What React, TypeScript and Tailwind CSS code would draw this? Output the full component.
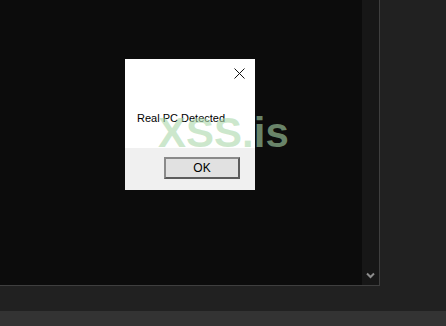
import React from 'react';

function ScrollChevron() {
  return (
    <svg width="9" height="7" viewBox="0 0 9 7" className="mb-[6px]">
      <path d="M1 1.5 L4.5 5 L8 1.5" stroke="#8c8c8c" strokeWidth="2" fill="none" />
    </svg>
  );
}

function CloseIcon() {
  return (
    <svg width="11" height="11" viewBox="0 0 11 11">
      <path d="M0.5 0.5 L10.5 10.5 M10.5 0.5 L0.5 10.5" stroke="#111" strokeWidth="1" fill="none" />
    </svg>
  );
}

function MessageBox() {
  return (
    <div className="absolute left-[125px] top-[59px] w-[130px] h-[131px] flex flex-col font-['Liberation_Sans',Arial,sans-serif]">
      <div className="h-[89px] bg-white flex flex-col">
        <div className="flex justify-end pt-[9px] pr-[10px]">
          <CloseIcon />
        </div>
        <div className="mt-[33px] pl-[12px] text-[11px] leading-[13px] text-black">Real PC Detected</div>
      </div>
      <div className="flex-1 bg-[#f0f0f0] flex items-start pt-[9px] pl-[39px]">
        <button className="w-[76px] h-[22px] bg-[#e1e1e1] border-2 border-t-[#8a8a8a] border-l-[#8a8a8a] border-b-[#5c5c5c] border-r-[#5c5c5c] text-[12px] leading-none text-black flex items-center justify-center">
          OK
        </button>
      </div>
    </div>
  );
}

export default function App() {
  return (
    <div className="relative w-[446px] h-[326px] bg-[#212121] flex flex-col overflow-hidden">
      <div className="h-[286px] flex">
        <div className="w-[380px] flex border-r border-b border-[#3f3f3f]">
          <div className="flex-1 bg-[#0c0c0c]" />
          <div className="w-[17px] bg-[#171717] flex flex-col justify-end items-center">
            <ScrollChevron />
          </div>
        </div>
      </div>
      <div className="flex-1" />
      <div className="h-[15px] bg-[#333333]" />

      <MessageBox />

      <div className="absolute left-[158px] top-[112px] text-[42px] leading-none font-bold font-['Liberation_Sans',Arial,sans-serif] text-[rgba(170,215,170,0.6)] pointer-events-none">
        XSS.is
      </div>
    </div>
  );
}
